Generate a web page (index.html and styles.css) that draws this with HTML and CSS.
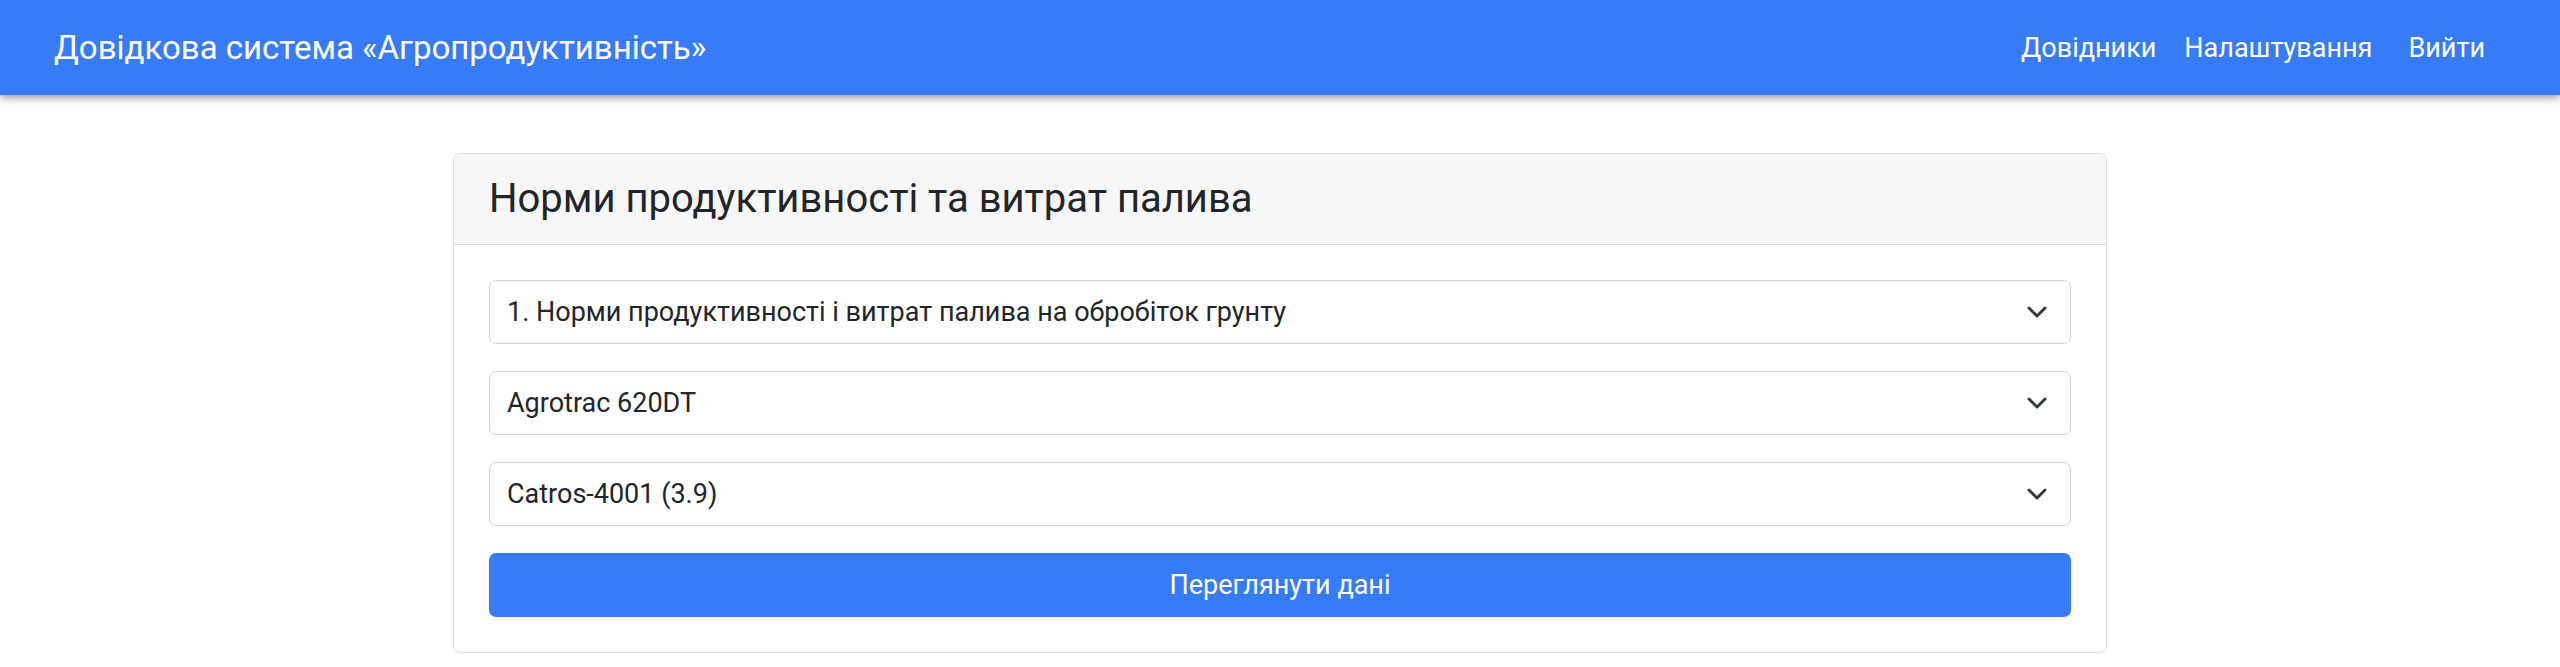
FILE: index.html
```html
<!DOCTYPE html>
<html lang="uk">
<head>
  <meta charset="UTF-8" />
  <meta name="viewport" content="width=device-width, initial-scale=1.0" />
  <title>Агропродуктивність</title>
  <link rel="stylesheet" href="styles.css">
</head>
<body>

  <nav class="navbar">
    <a class="brand" href="#">Довідкова система «Агропродуктивність»</a>
    <ul class="nav-links">
      <li><a href="#">Довідники</a></li>
      <li><a href="#">Налаштування</a></li>
      <li class="logout"><a href="#">Вийти</a></li>
    </ul>
  </nav>

  <main class="page">
    <div class="card">
      <div class="card-header">
        <h4>Норми продуктивності та витрат палива</h4>
      </div>
      <form class="card-body">
        <div class="select-wrap">
          <select class="form-select" id="section">
            <option>1. Норми продуктивності і витрат палива на обробіток грунту</option>
          </select>
          <svg class="chevron" width="20" height="12" viewBox="0 0 20 12"><path d="M2 2 L10 10 L18 2" /></svg>
        </div>
        <div class="select-wrap">
          <select class="form-select" id="tractor">
            <option>Agrotrac 620DT</option>
          </select>
          <svg class="chevron" width="20" height="12" viewBox="0 0 20 12"><path d="M2 2 L10 10 L18 2" /></svg>
        </div>
        <div class="select-wrap">
          <select class="form-select" id="machine">
            <option>Catros-4001 (3.9)</option>
          </select>
          <svg class="chevron" width="20" height="12" viewBox="0 0 20 12"><path d="M2 2 L10 10 L18 2" /></svg>
        </div>
        <button type="button" class="btn-primary">Переглянути дані</button>
      </form>
    </div>
  </main>

</body>
</html>
```

FILE: styles.css
```css
* {
  box-sizing: border-box;
  margin: 0;
  padding: 0;
}
html, body {
  height: 100%;
  font-family: Roboto, "Noto Sans", sans-serif;
  background: #fff;
  color: #212529;
}

.navbar {
  display: flex;
  align-items: center;
  justify-content: space-between;
  height: 95px;
  padding: 0 61px 0 54px;
  background: #377bf6;
  box-shadow: 0 3px 8px rgba(0, 0, 0, 0.4);
  position: relative;
  z-index: 10;
}
.brand {
  color: #fff;
  font-size: 33px;
  text-decoration: none;
}
.nav-links {
  display: flex;
  list-style: none;
}
.nav-links a {
  display: block;
  padding: 0 14px;
  color: #fff;
  font-size: 27px;
  text-decoration: none;
}
.nav-links .logout {
  margin-left: 8px;
}

.page {
  padding-top: 58px;
}
.card {
  width: 1654px;
  margin: 0 auto;
  border: 1px solid #dcdcdc;
  border-radius: 7px;
  overflow: hidden;
}
.card-header {
  background: #f7f7f7;
  border-bottom: 1px solid #dcdcdc;
  padding: 20px 35px;
}
.card-header h4 {
  font-size: 40px;
  font-weight: 400;
  line-height: 50px;
}
.card-body {
  display: flex;
  flex-direction: column;
  gap: 27px;
  padding: 35px;
}

.select-wrap {
  position: relative;
}
.form-select {
  appearance: none;
  -webkit-appearance: none;
  display: block;
  width: 100%;
  height: 64px;
  padding: 0 60px 0 17px;
  border: 1px solid #ced4da;
  border-radius: 7px;
  background: #fff;
  color: #212529;
  font-family: inherit;
  font-size: 27px;
}
.chevron {
  position: absolute;
  right: 24px;
  top: 26px;
  fill: none;
  stroke: #343a40;
  stroke-width: 3;
  stroke-linecap: round;
  stroke-linejoin: round;
}

.btn-primary {
  height: 64px;
  border: none;
  border-radius: 7px;
  background: #377bf6;
  color: #fff;
  font-family: inherit;
  font-size: 27px;
  cursor: pointer;
}
```
